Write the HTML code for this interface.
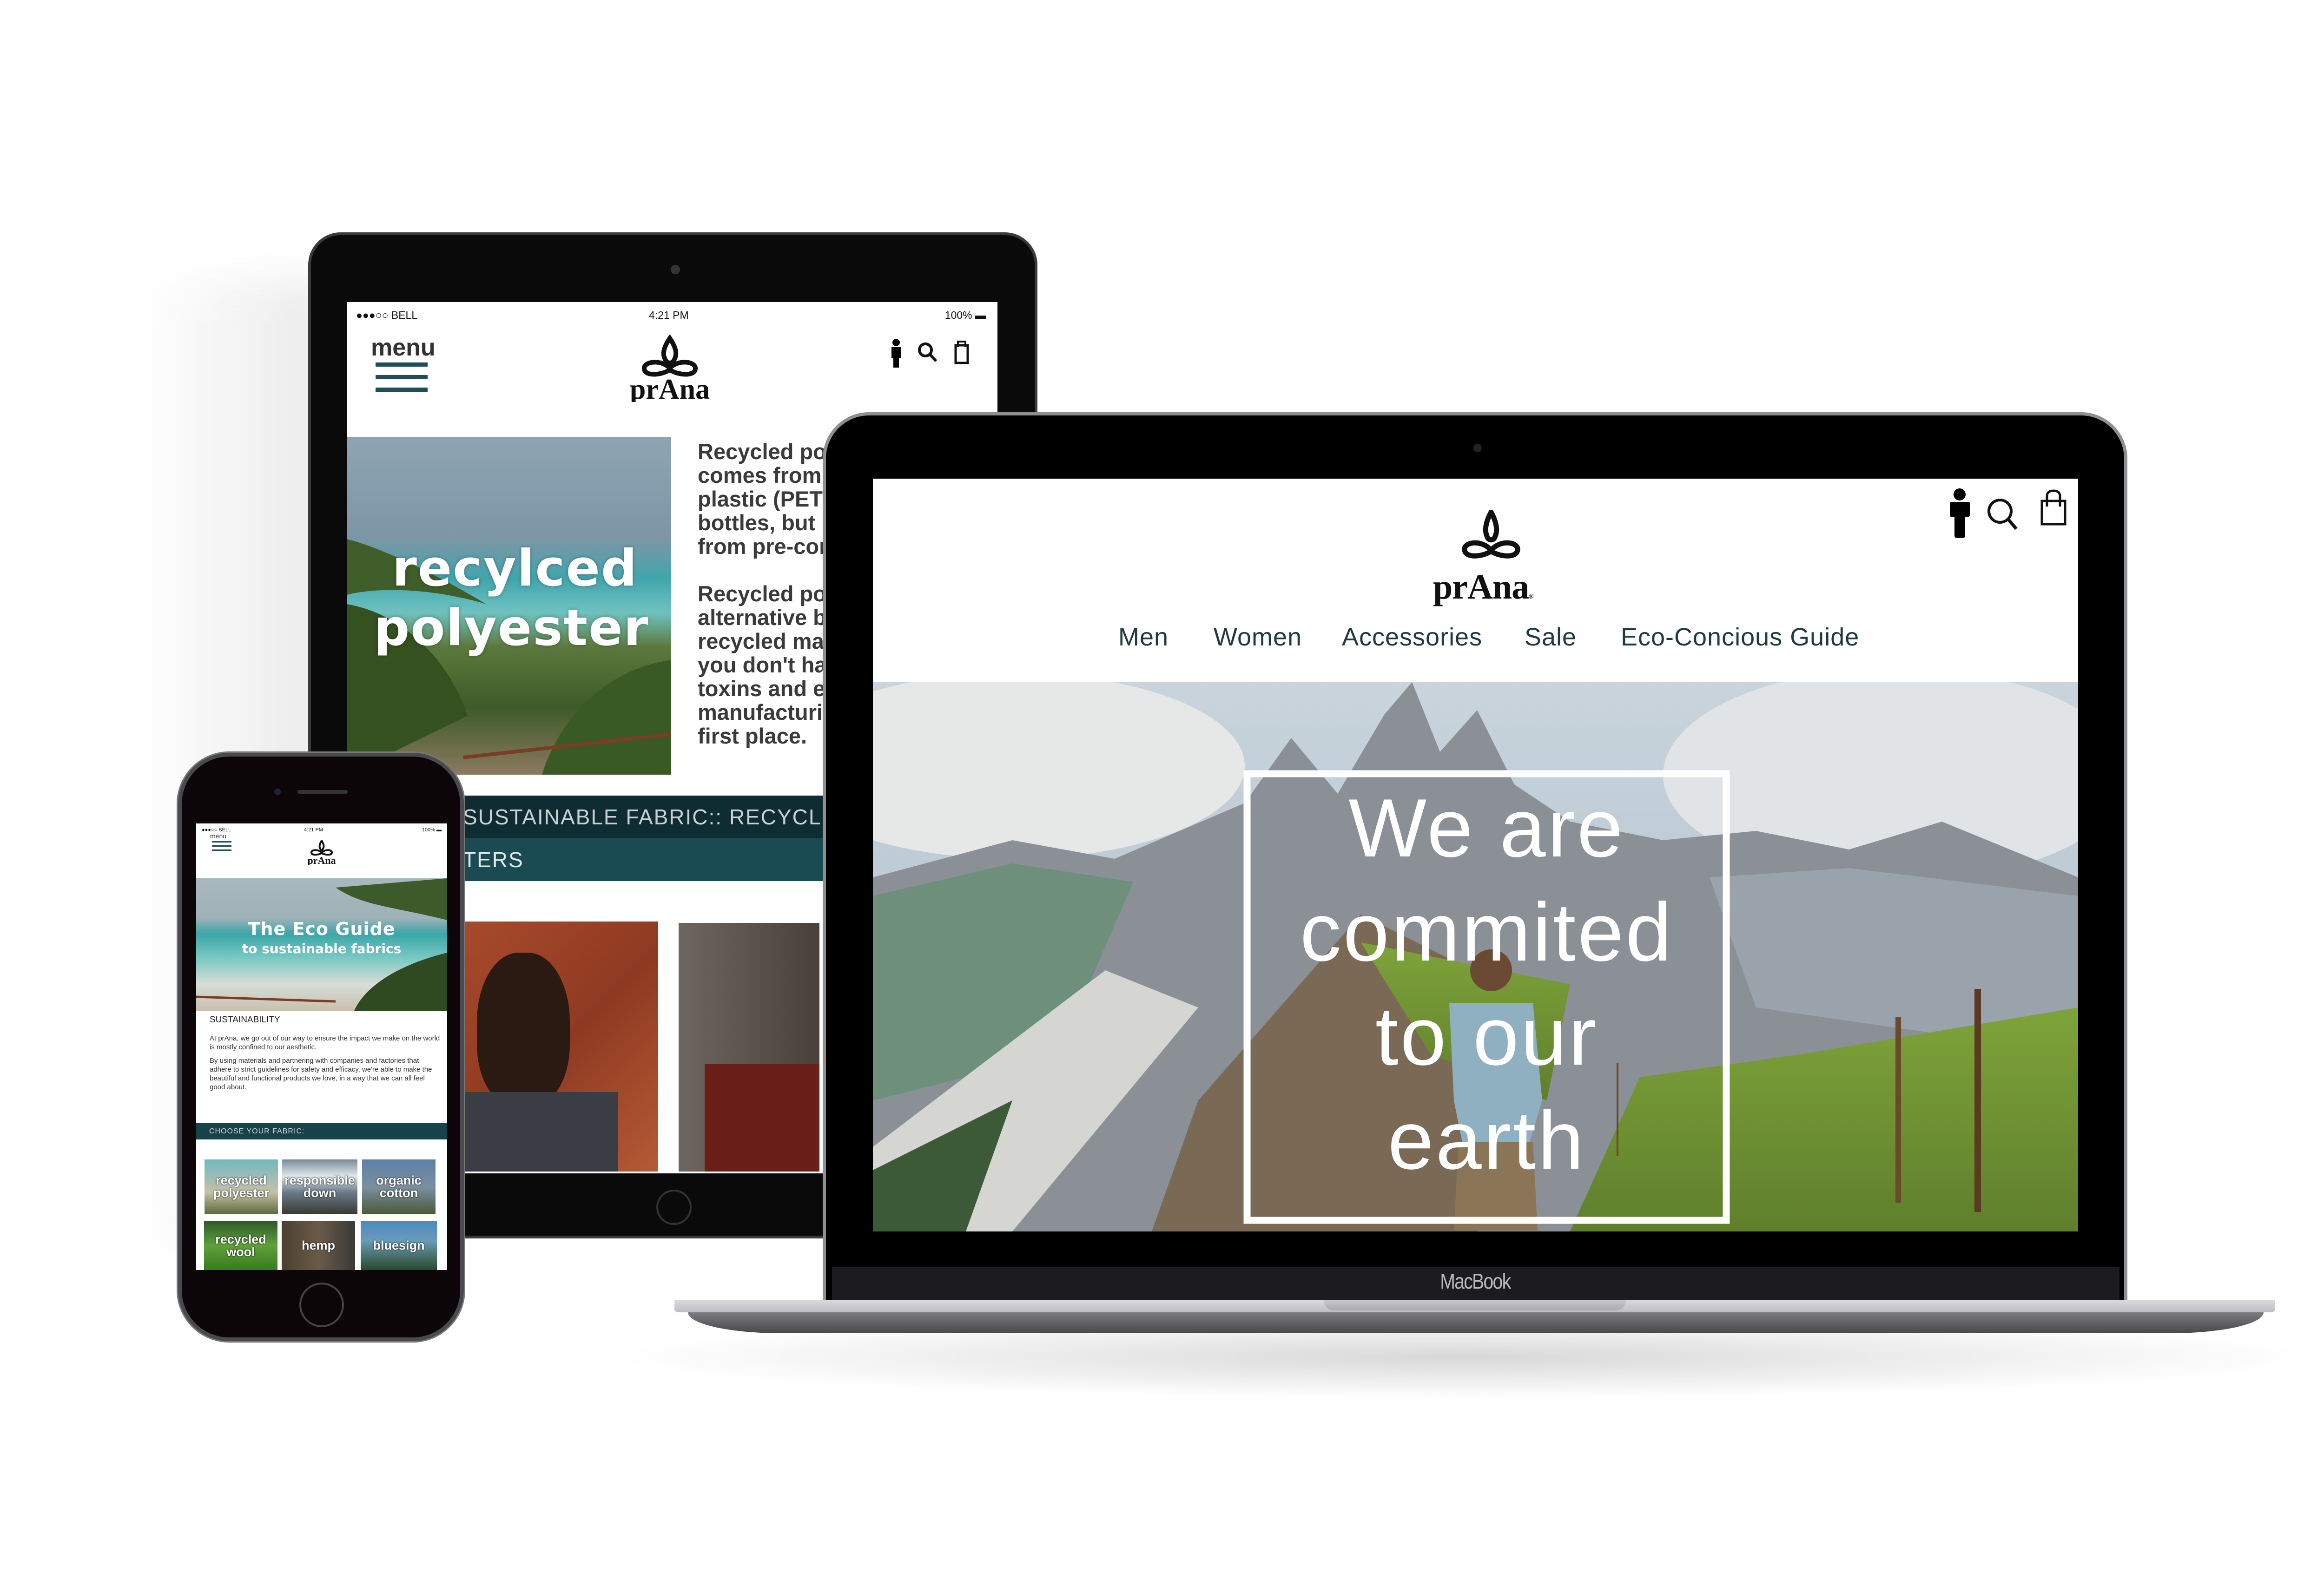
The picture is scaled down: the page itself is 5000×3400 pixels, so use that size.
<!DOCTYPE html>
<html><head><meta charset="utf-8"><style>
*{margin:0;padding:0;box-sizing:border-box}
body{width:5000px;height:3400px;background:#fff;position:relative;overflow:hidden;font-family:"Liberation Sans",sans-serif}
.a{position:absolute}
.nav{font-size:54px;color:#1d3a40;top:1340px;letter-spacing:1px}
.tt{font-size:47px;color:#3a3a3a;font-weight:bold;line-height:51px;white-space:nowrap}
.hero{color:#fff;font-size:178px;text-align:center;width:1031px;left:2683px;letter-spacing:4px;line-height:224px}
.tile{position:absolute;color:#fff;font-weight:bold;font-size:27px;text-align:center;line-height:27px;display:flex;align-items:center;justify-content:center;text-shadow:0 0 3px #000}
</style></head><body>

<div class="a" style="left:300px;top:600px;width:400px;height:2100px;background:linear-gradient(90deg,#fff,#e8e8e8 80%,#ddd);filter:blur(40px);opacity:.7"></div>
<div class="a" style="left:1300px;top:2830px;width:3700px;height:180px;background:radial-gradient(ellipse at center,#d8d8d8,rgba(255,255,255,0) 70%)"></div>

<!-- TABLET -->
<div class="a" style="left:663px;top:500px;width:1569px;height:2165px;background:#0a0a0a;border-radius:70px;border:6px solid #3a3a3a"></div>
<div class="a" style="left:1443px;top:570px;width:20px;height:20px;border-radius:50%;background:#333"></div>
<div class="a" style="left:1412px;top:2560px;width:76px;height:76px;border-radius:50%;border:4px solid #333"></div>
<div class="a" style="left:746px;top:650px;width:1400px;height:1875px;background:#fff;overflow:hidden">
  <div class="a" style="left:20px;top:15px;font-size:23px;color:#111">●●●○○ BELL</div>
  <div class="a" style="left:650px;top:15px;font-size:23px;color:#111">4:21 PM</div>
  <div class="a" style="right:25px;top:15px;font-size:23px;color:#111">100% ▬</div>
  <div class="a" style="left:52px;top:68px;font-size:52px;color:#333;font-weight:bold">menu</div>
  <div class="a" style="left:62px;top:130px;width:112px;height:9px;background:#1d4f56;box-shadow:0 27px 0 #1d4f56,0 54px 0 #1d4f56"></div>
  <svg class="a" style="left:580px;top:70px" width="230" height="145" viewBox="0 0 230 145">
    <path d="M115 8 C100 30 98 45 108 58 C112 62 118 62 122 58 C132 45 130 30 115 8Z M115 72 C95 52 58 58 60 74 C62 90 95 88 115 76 C135 88 168 90 170 74 C172 58 135 52 115 72Z" fill="none" stroke="#111" stroke-width="10"/>
    <text x="115" y="138" text-anchor="middle" font-family="Liberation Serif" font-weight="bold" font-size="62" fill="#111">prAna</text>
  </svg>
  <svg class="a" style="left:1160px;top:75px" width="220" height="70" viewBox="0 0 220 70">
    <circle cx="22" cy="12" r="8"/><rect x="12" y="22" width="20" height="24"/><rect x="16" y="44" width="12" height="22"/>
    <circle cx="85" cy="28" r="13" fill="none" stroke="#111" stroke-width="6"/><line x1="95" y1="38" x2="108" y2="52" stroke="#111" stroke-width="6"/>
    <rect x="150" y="18" width="26" height="38" fill="none" stroke="#111" stroke-width="5"/><path d="M155 22 V10 H171 V22" fill="none" stroke="#111" stroke-width="4"/>
  </svg>
  <div class="a" style="left:0;top:290px;width:698px;height:727px;background:linear-gradient(180deg,#8ea4b2 0%,#7d96a6 30%,#41a5ad 42%,#6fc2c0 52%,#5c7a3e 62%,#3e5a28 80%,#8b7a60 100%)"></div>
  <svg class="a" style="left:0;top:290px" width="698" height="727">
    <path d="M0 220 C80 240 200 300 300 360 C200 330 80 320 0 340Z" fill="#3f5e2a"/>
    <path d="M0 360 C120 380 220 480 260 600 L0 727Z" fill="#34511f"/>
    <path d="M698 480 C560 500 460 600 420 727 L698 727Z" fill="#3a5a25"/>
    <path d="M250 690 L698 640" stroke="#7a3d28" stroke-width="8"/>
  </svg>
  <div class="a" style="left:58px;top:510px;font-size:108px;font-weight:900;color:#fff;font-family:'DejaVu Sans';line-height:128px;letter-spacing:2px;text-shadow:0 0 8px rgba(0,0,0,.3)">&nbsp;recylced<br>polyester</div>
  <div class="a tt" style="left:755px;top:296px">Recycled polyester<br>comes from post-consumer<br>plastic (PET) water<br>bottles, but it also comes<br>from pre-consumer waste.<br><br>Recycled polyester is an<br>alternative because<br>recycled materials mean<br>you don't have to use<br>toxins and energy<br>manufacturing in the<br>first place.</div>
  <div class="a" style="left:0;top:1062px;width:1400px;height:92px;background:#0f2c33;color:#c8d2d4;font-size:46px;line-height:92px;padding-left:250px;letter-spacing:2px">SUSTAINABLE FABRIC:: RECYCLED POLYES</div>
  <div class="a" style="left:0;top:1154px;width:1400px;height:92px;background:#1a4b53;color:#e0e8e8;font-size:46px;line-height:92px;padding-left:250px;letter-spacing:2px">TERS</div>
  <div class="a" style="left:254px;top:1333px;width:416px;height:538px;background:linear-gradient(135deg,#a84a2c,#8e3a22 50%,#b55a34)"></div>
  <div class="a" style="left:280px;top:1400px;width:200px;height:330px;border-radius:45% 45% 40% 40%;background:#2a1a12"></div>
  <div class="a" style="left:254px;top:1700px;width:330px;height:171px;background:#3a3d44"></div>
  <div class="a" style="left:714px;top:1336px;width:303px;height:535px;background:linear-gradient(90deg,#6e6660,#4a403a)"></div>
  <div class="a" style="left:770px;top:1640px;width:247px;height:231px;background:#6a1f18"></div>
</div>

<!-- LAPTOP -->
<div class="a" style="left:1770px;top:887px;width:2807px;height:1913px;background:#000;border-radius:100px 100px 0 0;border:7px solid #8f8f93;border-bottom:none"></div>
<div class="a" style="left:3170px;top:955px;width:18px;height:18px;border-radius:50%;background:#222"></div>
<div class="a" style="left:1790px;top:2726px;width:2770px;height:72px;background:#1c1b20"></div>
<div class="a" style="left:3085px;top:2730px;font-size:46px;color:#bbb;letter-spacing:-2px;transform:scaleX(.85)">MacBook</div>
<div class="a" style="left:1451px;top:2798px;width:3444px;height:26px;background:linear-gradient(#d9d9de,#bdbdc3);border-radius:0 0 8px 8px"></div>
<div class="a" style="left:2848px;top:2798px;width:650px;height:22px;background:linear-gradient(#c8c8cc,#a8a8ae);border-radius:0 0 30px 30px"></div>
<div class="a" style="left:1480px;top:2824px;width:3390px;height:45px;background:linear-gradient(#7b7b80,#48484d);border-radius:0 0 200px 200px/0 0 45px 45px"></div>

<div class="a" style="left:1878px;top:1030px;width:2593px;height:1620px;background:#fff;overflow:hidden">
  <svg class="a" style="left:1255px;top:68px" width="150" height="130" viewBox="0 0 150 130">
    <path d="M75 4 C62 28 60 46 68 60 C71 65 79 65 82 60 C90 46 88 28 75 4Z M75 86 C55 62 15 68 18 86 C21 104 58 100 75 88 C92 100 129 104 132 86 C135 68 95 62 75 86Z" fill="none" stroke="#111" stroke-width="11"/>
  </svg>
  <div class="a" style="left:1205px;top:190px;font-family:'Liberation Serif',serif;font-weight:bold;font-size:76px;color:#111;letter-spacing:-1px">prAna<span style="font-size:14px">®</span></div>
  <div class="a nav" style="left:528px;top:310px">Men</div>
  <div class="a nav" style="left:733px;top:310px">Women</div>
  <div class="a nav" style="left:1009px;top:310px">Accessories</div>
  <div class="a nav" style="left:1402px;top:310px">Sale</div>
  <div class="a nav" style="left:1609px;top:310px">Eco-Concious Guide</div>
  <svg class="a" style="left:2310px;top:20px" width="290" height="120" viewBox="0 0 290 120">
    <circle cx="28" cy="14" r="13"/><rect x="7" y="30" width="43" height="32" rx="3"/><rect x="17" y="58" width="23" height="50" rx="5"/>
    <circle cx="115" cy="50" r="24" fill="none" stroke="#111" stroke-width="6"/><line x1="133" y1="68" x2="150" y2="88" stroke="#111" stroke-width="7"/>
    <rect x="205" y="28" width="50" height="50" fill="none" stroke="#111" stroke-width="5"/><path d="M216 40 V18 Q216 6 230 6 Q244 6 244 18 V40" fill="none" stroke="#111" stroke-width="5"/>
  </svg>
  <svg class="a" style="left:0;top:438px" width="2593" height="1182" viewBox="0 0 2593 1182">
    <defs>
      <linearGradient id="sky" x1="0" y1="0" x2="0" y2="1"><stop offset="0" stop-color="#c9d4dc"/><stop offset="1" stop-color="#a9bccb"/></linearGradient>
      <linearGradient id="gr" x1="0" y1="0" x2="0" y2="1"><stop offset="0" stop-color="#7fa33a"/><stop offset="1" stop-color="#5f7f2c"/></linearGradient>
    </defs>
    <rect width="2593" height="1182" fill="url(#sky)"/>
    <ellipse cx="300" cy="180" rx="500" ry="200" fill="#e6e8e8"/>
    <ellipse cx="2200" cy="200" rx="500" ry="230" fill="#e1e4e6"/>
    <path d="M0 420 L300 340 L520 380 L800 260 L900 120 L1000 240 L1100 70 L1160 0 L1220 150 L1300 60 L1380 220 L1500 300 L1700 340 L1900 320 L2100 360 L2300 300 L2593 420 L2593 1182 L0 1182Z" fill="#8b8f96"/>
    <path d="M0 460 L300 390 L560 430 L400 800 L0 900Z" fill="#6e8f7a"/>
    <path d="M1800 420 L2100 400 L2593 460 L2593 800 L1900 700Z" fill="#9aa3ab"/>
    <path d="M0 1000 L500 620 L700 700 L300 1182 L0 1182Z" fill="#d5d5d2"/>
    <path d="M0 1182 L0 1050 L300 900 L200 1182Z" fill="#3d5a38"/>
    <path d="M700 900 L1050 500 L1250 600 L1300 1182 L600 1182Z" fill="#7a6a55"/>
    <path d="M1050 560 L1500 650 L1450 900 L1200 800Z" fill="url(#gr)"/>
    <path d="M1500 1182 L1650 850 L2000 800 L2593 700 L2593 1182Z" fill="url(#gr)"/>
    <rect x="1600" y="820" width="4" height="200" fill="#6a4a2a"/><rect x="2200" y="720" width="12" height="400" fill="#6a4a2a"/><rect x="2370" y="660" width="14" height="480" fill="#5a3a20"/>
    <circle cx="1330" cy="620" r="45" fill="#6b4a33"/>
    <path d="M1240 690 L1420 690 L1440 900 L1410 1000 L1270 1000 L1250 900Z" fill="#8fb0c0"/>
    <path d="M1260 990 L1420 990 L1430 1180 L1250 1180Z" fill="#8a7556"/>
    <rect x="805" y="197" width="1031" height="961" fill="none" stroke="#fff" stroke-width="15"/>
  </svg>
  <div class="a hero" style="left:805px;top:640px">We are<br>commited<br>to our<br>earth</div>
</div>

<!-- PHONE -->
<div class="a" style="left:383px;top:1620px;width:615px;height:1266px;background:#0c0608;border-radius:110px;border:8px solid #4a4a4e;box-shadow:0 0 0 3px #777"></div>
<div class="a" style="left:590px;top:1697px;width:14px;height:14px;border-radius:50%;background:#223"></div>
<div class="a" style="left:640px;top:1700px;width:108px;height:8px;border-radius:4px;background:#333"></div>
<div class="a" style="left:644px;top:2760px;width:96px;height:96px;border-radius:50%;border:4px solid #444"></div>
<div class="a" style="left:422px;top:1772px;width:540px;height:961px;background:#fff;overflow:hidden">
  <div class="a" style="left:12px;top:8px;font-size:11px;color:#111">●●●○○ BELL</div>
  <div class="a" style="left:232px;top:8px;font-size:11px;color:#111">4:21 PM</div>
  <div class="a" style="right:12px;top:8px;font-size:11px;color:#111">100% ▬</div>
  <div class="a" style="left:30px;top:19px;font-size:14px;color:#333">menu</div>
  <div class="a" style="left:34px;top:38px;width:42px;height:3px;background:#1d4f56;box-shadow:0 9px 0 #1d4f56,0 18px 0 #1d4f56"></div>
  <svg class="a" style="left:225px;top:35px" width="90" height="55" viewBox="0 0 90 55">
    <path d="M45 2 C40 10 39 16 43 21 C44 23 46 23 47 21 C51 16 50 10 45 2Z M45 28 C36 19 22 22 23 28 C24 34 37 33 45 29 C53 33 66 34 67 28 C68 22 54 19 45 28Z" fill="none" stroke="#111" stroke-width="4"/>
    <text x="45" y="52" text-anchor="middle" font-family="Liberation Serif" font-weight="bold" font-size="22" fill="#111">prAna</text>
  </svg>
  <div class="a" style="left:0;top:118px;width:540px;height:285px;background:linear-gradient(180deg,#a8b8be 0%,#9fb2b8 30%,#3aa6a8 42%,#78c8c2 60%,#d8ddd6 80%,#c7c0b0 100%)"></div>
  <svg class="a" style="left:0;top:118px" width="540" height="285"><path d="M540 0 L300 20 C360 60 420 60 540 90Z" fill="#3d5a2a"/><path d="M540 160 C420 190 360 240 340 285 L540 285Z" fill="#2f4a20"/><path d="M0 255 L300 265" stroke="#7a3d28" stroke-width="5"/></svg>
  <div class="a" style="left:0;top:205px;width:540px;text-align:center;font-family:'DejaVu Sans';font-weight:bold;color:#fff;font-size:38px;letter-spacing:1px">The Eco Guide</div>
  <div class="a" style="left:0;top:253px;width:540px;text-align:center;font-family:'DejaVu Sans';font-weight:bold;color:#fff;font-size:28px">to sustainable fabrics</div>
  <div class="a" style="left:29px;top:412px;font-size:19px;color:#222">SUSTAINABILITY</div>
  <div class="a" style="left:29px;top:453px;font-size:15px;color:#333;line-height:19px;width:500px">At prAna, we go out of our way to ensure the impact we make on the world is mostly confined to our aesthetic.<br><div style="height:10px"></div>By using materials and partnering with companies and factories that adhere to strict guidelines for safety and efficacy, we're able to make the beautiful and functional products we love, in a way that we can all feel good about.</div>
  <div class="a" style="left:0;top:645px;width:540px;height:35px;background:#17424a;color:#cfdcdd;font-size:16px;line-height:35px;padding-left:28px;letter-spacing:1px">CHOOSE YOUR FABRIC:</div>
  <div class="tile" style="left:18px;top:723px;width:158px;height:118px;background:linear-gradient(#6fb9c0,#c6c0a8 60%,#5a6a3a)">recycled<br>polyester</div>
  <div class="tile" style="left:185px;top:723px;width:162px;height:118px;background:linear-gradient(#7a8a9a,#dfe6ea 30%,#6a7a8a 60%,#3a3a30)">responsible<br>down</div>
  <div class="tile" style="left:357px;top:723px;width:158px;height:118px;background:linear-gradient(#5f7fa8,#7a90a0 50%,#4a5a3a)">organic<br>cotton</div>
  <div class="tile" style="left:17px;top:856px;width:158px;height:105px;background:linear-gradient(#2e5a2a,#5fa03a 50%,#3a7a20)">recycled<br>wool</div>
  <div class="tile" style="left:184px;top:856px;width:158px;height:105px;background:linear-gradient(90deg,#4a4030,#6a5a48 50%,#3a3a38)">hemp</div>
  <div class="tile" style="left:354px;top:856px;width:164px;height:105px;background:linear-gradient(#4a8ac0,#6a9ab8 40%,#2a4a2a)">bluesign</div>
</div>
</body></html>
